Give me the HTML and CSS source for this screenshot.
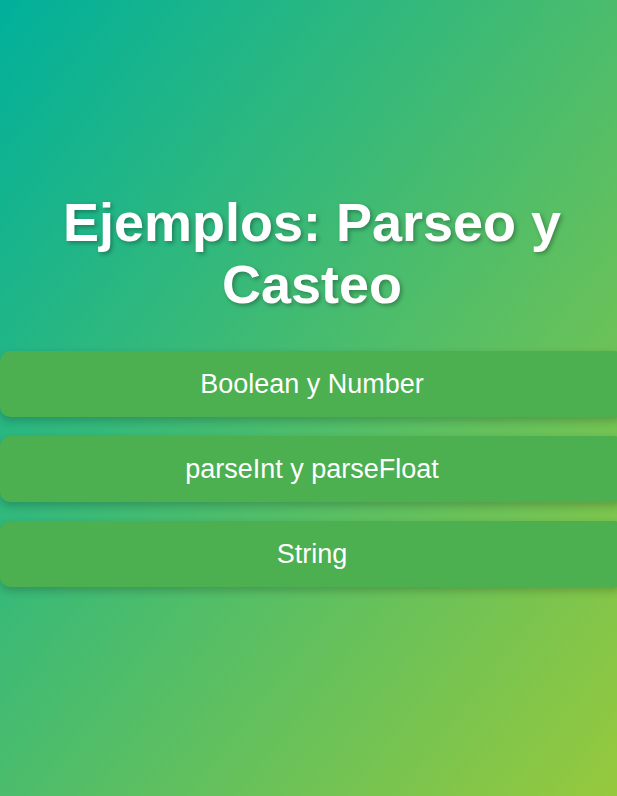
FILE: index.html
```html
<!DOCTYPE html>
<html lang="es">
<head>
<meta charset="utf-8">
<title>Ejemplos: Parseo y Casteo</title>
<link rel="stylesheet" href="styles.css">
</head>
<body>
<main class="page">
  <h1 class="title">Ejemplos: Parseo y Casteo</h1>
  <nav class="menu">
    <a class="menu-btn" href="#">Boolean y Number</a>
    <a class="menu-btn" href="#">parseInt y parseFloat</a>
    <a class="menu-btn" href="#">String</a>
  </nav>
</main>
</body>
</html>
```
FILE: styles.css
```css
html, body {
  margin: 0;
  padding: 0;
}
body {
  min-height: 100vh;
  overflow-x: hidden;
  background: linear-gradient(to bottom right, #00b09b, #96c93d);
  font-family: "Liberation Sans", Arial, sans-serif;
}
.page {
  width: 624px;
  padding-top: 191px;
  display: flex;
  flex-direction: column;
}
.title {
  margin: 0 0 36px;
  color: #fff;
  font-size: 54px;
  line-height: 62px;
  font-weight: bold;
  text-align: center;
  text-shadow: 2px 2px 4px rgba(0, 0, 0, 0.3);
}
.menu {
  display: flex;
  flex-direction: column;
  gap: 19px;
}
.menu-btn {
  display: block;
  background: #4caf50;
  color: #fff;
  text-decoration: none;
  text-align: center;
  font-size: 27px;
  line-height: 32px;
  padding: 17px 0;
  border-radius: 10px;
  box-shadow: 0 4px 8px rgba(0, 0, 0, 0.2);
}
```
